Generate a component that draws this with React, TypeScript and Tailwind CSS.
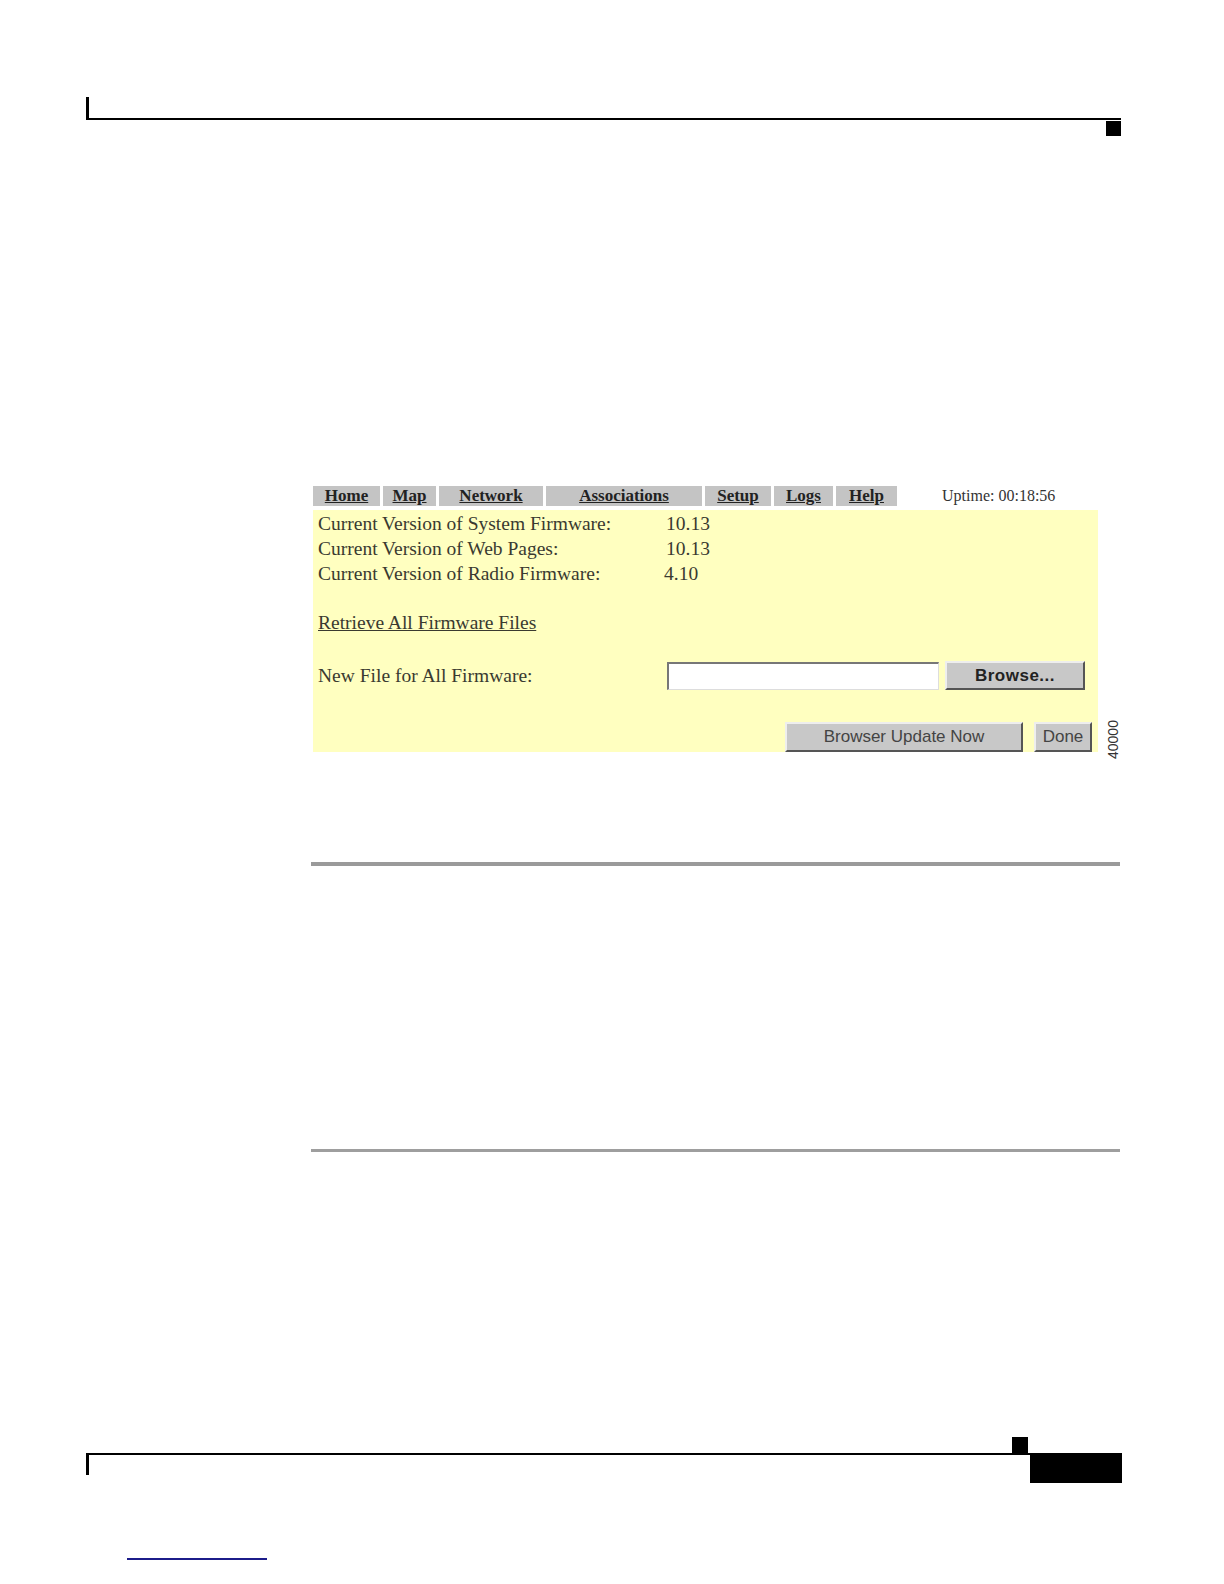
import React from "react";

const serif = { fontFamily: '"Liberation Serif", "Times New Roman", serif' };
const sans = { fontFamily: '"Liberation Sans", Arial, sans-serif' };

const navItems: { label: string; w: string }[] = [
  { label: "Home", w: "w-[67px]" },
  { label: "Map", w: "w-[53px]" },
  { label: "Network", w: "w-[104px]" },
  { label: "Associations", w: "w-[156px]" },
  { label: "Setup", w: "w-[66px]" },
  { label: "Logs", w: "w-[59px]" },
  { label: "Help", w: "w-[61px]" },
];

const rows: [string, string][] = [
  ["Current Version of System Firmware:", "10.13"],
  ["Current Version of Web Pages:", "10.13"],
  ["Current Version of Radio Firmware:", "4.10"],
];

export default function App() {
  return (
    <div className="relative w-[1224px] h-[1584px] bg-white flex flex-col">
      {/* Header */}
      <div className="pt-[97px] pl-[86px] flex flex-col">
        <div className="w-[1035px] h-[23px] border-l-[3px] border-b-[2px] border-black" />
        <div className="w-[1035px] flex justify-end">
          <div className="w-[15px] h-[15px] bg-black mt-[1px]" />
        </div>
      </div>

      {/* Screenshot */}
      <div className="pl-[313px] mt-[350px] flex flex-col" style={serif}>
        <div className="flex items-center h-[20px]">
          <div className="flex gap-[3px] h-[20px]">
            {navItems.map((n) => (
              <div
                key={n.label}
                className={`${n.w} h-[20px] bg-[#c4c4c4] flex items-center justify-center text-[17px] leading-[20px] font-bold underline text-[#222]`}
              >
                {n.label}
              </div>
            ))}
          </div>
          <div className="ml-[45px] text-[16px] text-[#333]">Uptime: 00:18:56</div>
        </div>

        <div className="relative mt-[4px] w-[785px] h-[242px] bg-[#ffffc0] pl-[5px] pt-[1px] flex flex-col text-[19.5px] text-[#3a3a30]">
          {rows.map(([l, v], i) => (
            <div key={l} className="flex h-[25px] leading-[25px]">
              <div className="w-[348px]">{l}</div>
              <div className={i === 2 ? "-ml-[2px]" : ""}>{v}</div>
            </div>
          ))}
          <div className="h-[25px]" />
          <div className="h-[25px] leading-[25px]">
            <span className="underline">Retrieve All Firmware Files</span>
          </div>
          <div className="mt-[26px] flex items-center h-[29px]">
            <div className="w-[349px]">New File for All Firmware:</div>
            <div className="w-[272px] h-[28px] bg-white border-t-[2px] border-l-[2px] border-[#777] border-b-[1px] border-r-[1px] border-b-[#ddd] border-r-[#ddd]" />
            <button
              className="ml-[6px] w-[140px] h-[29px] bg-[#c8c8c8] border-t-[2px] border-l-[2px] border-[#eeeeee] border-b-[2px] border-r-[2px] border-b-[#555] border-r-[#555] text-[17px] font-bold text-[#222] tracking-[0.5px]"
              style={sans}
            >
              Browse...
            </button>
          </div>
          <div className="mt-[32px] flex justify-end pr-[6px] gap-[11px]">
            <button
              className="w-[238px] h-[30px] bg-[#c8c8c8] border-t-[2px] border-l-[2px] border-[#eeeeee] border-b-[2px] border-r-[2px] border-b-[#555] border-r-[#555] text-[17px] text-[#444]"
              style={sans}
            >
              Browser Update Now
            </button>
            <button
              className="w-[58px] h-[30px] bg-[#c8c8c8] border-t-[2px] border-l-[2px] border-[#eeeeee] border-b-[2px] border-r-[2px] border-b-[#555] border-r-[#555] text-[17px] text-[#444]"
              style={sans}
            >
              Done
            </button>
          </div>
          <div
            className="absolute left-[792px] top-[205px] w-[44px] h-[16px] text-[14px] leading-[16px] text-[#333] -rotate-90 origin-top-left translate-y-[44px]"
            style={sans}
          >
            40000
          </div>
        </div>
      </div>

      {/* Rules */}
      <div className="ml-[311px] mt-[110px] w-[809px] h-[4px] bg-[#9a9a9a]" />
      <div className="ml-[311px] mt-[283px] w-[809px] h-[3px] bg-[#9e9e9e]" />

      {/* Footer */}
      <div className="ml-[86px] mt-[285px] w-[1036px] flex flex-col">
        <div className="flex">
          <div className="ml-[926px] w-[16px] h-[16px] bg-black" />
        </div>
        <div className="flex">
          <div className="w-[944px] h-[22px] border-l-[3px] border-t-[2px] border-black" />
          <div className="w-[92px] h-[30px] bg-black" />
        </div>
      </div>

      <div className="ml-[127px] mt-[75px] w-[140px] h-[2px] bg-[#1c1c8a]" />
    </div>
  );
}
